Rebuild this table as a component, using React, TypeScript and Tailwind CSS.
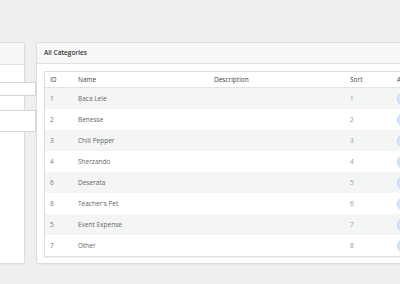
import React from 'react'

const rows = [
  { id: 1, name: 'Baca Lele', sort: 1 },
  { id: 2, name: 'Benesse', sort: 2 },
  { id: 3, name: 'Chili Pepper', sort: 3 },
  { id: 4, name: 'Sherzando', sort: 4 },
  { id: 6, name: 'Deserata', sort: 5 },
  { id: 8, name: "Teacher's Pet", sort: 6 },
  { id: 5, name: 'Event Expense', sort: 7 },
  { id: 7, name: 'Other', sort: 8 },
]

function App() {
  return (
    <div
      className="w-[400px] h-[284px] overflow-hidden bg-[#efefef] text-[6.5px] text-[#555]"
      style={{ fontFamily: '"Open Sans", sans-serif' }}
    >
      <div className="flex gap-[11px] pt-[42px] ml-[-150px]">
        {/* left form panel */}
        <div className="w-[175px] shrink-0 h-[222px] bg-white border border-[#dcdcdc] rounded-[2px] shadow-[0_1px_1px_rgba(0,0,0,0.04)]">
          <div className="h-[22px] bg-[#f8f8f8] border-b border-[#e1e1e1]" />
          <div className="pt-[17px]">
            <div className="w-[185px] h-[14px] bg-white border border-[#d6d6d6]" />
            <div className="h-[14px]" />
            <div className="w-[185px] h-[22px] bg-white border border-[#d6d6d6]" />
          </div>
        </div>

        {/* categories panel */}
        <div className="w-[390px] shrink-0 h-[222px] bg-white border border-[#dcdcdc] rounded-[2px] shadow-[0_1px_1px_rgba(0,0,0,0.04)]">
          <div className="h-[21px] bg-[#f8f8f8] border-b border-[#e1e1e1] flex items-center px-[7px] font-semibold text-[#333]">
            All Categories
          </div>
          <div className="px-[7px] pt-[7px]">
            <div className="border border-[#dedede] shadow-[0_1px_1px_rgba(0,0,0,0.06)]">
              <div className="flex items-center h-[16px] border-b border-[#e3e3e3] text-[#444]">
                <div className="w-[28px] shrink-0 pl-[5px]">ID</div>
                <div className="w-[136px] shrink-0 pl-[5px]">Name</div>
                <div className="w-[136px] shrink-0 pl-[5px]">Description</div>
                <div className="w-[48px] shrink-0 pl-[5px]">Sort</div>
                <div className="shrink-0 pl-[4px] whitespace-nowrap">Actions</div>
              </div>
              {rows.map((r, i) => (
                <div
                  key={r.id}
                  className={`flex items-center h-[21px] ${i % 2 === 0 ? 'bg-[#f4f5f5]' : 'bg-white'}`}
                >
                  <div className="w-[28px] shrink-0 pl-[5px] text-[#777]">{r.id}</div>
                  <div className="w-[136px] shrink-0 pl-[5px] text-[#666]">{r.name}</div>
                  <div className="w-[136px] shrink-0 pl-[5px]" />
                  <div className="w-[48px] shrink-0 pl-[5px] text-[#999]">{r.sort}</div>
                  <div className="shrink-0 pl-[4px]">
                    <div className="w-[14px] h-[14px] rounded-full bg-[#d6e6fd] border border-[#b9d4fb]" />
                  </div>
                </div>
              ))}
            </div>
          </div>
        </div>
      </div>
    </div>
  )
}

export default App
